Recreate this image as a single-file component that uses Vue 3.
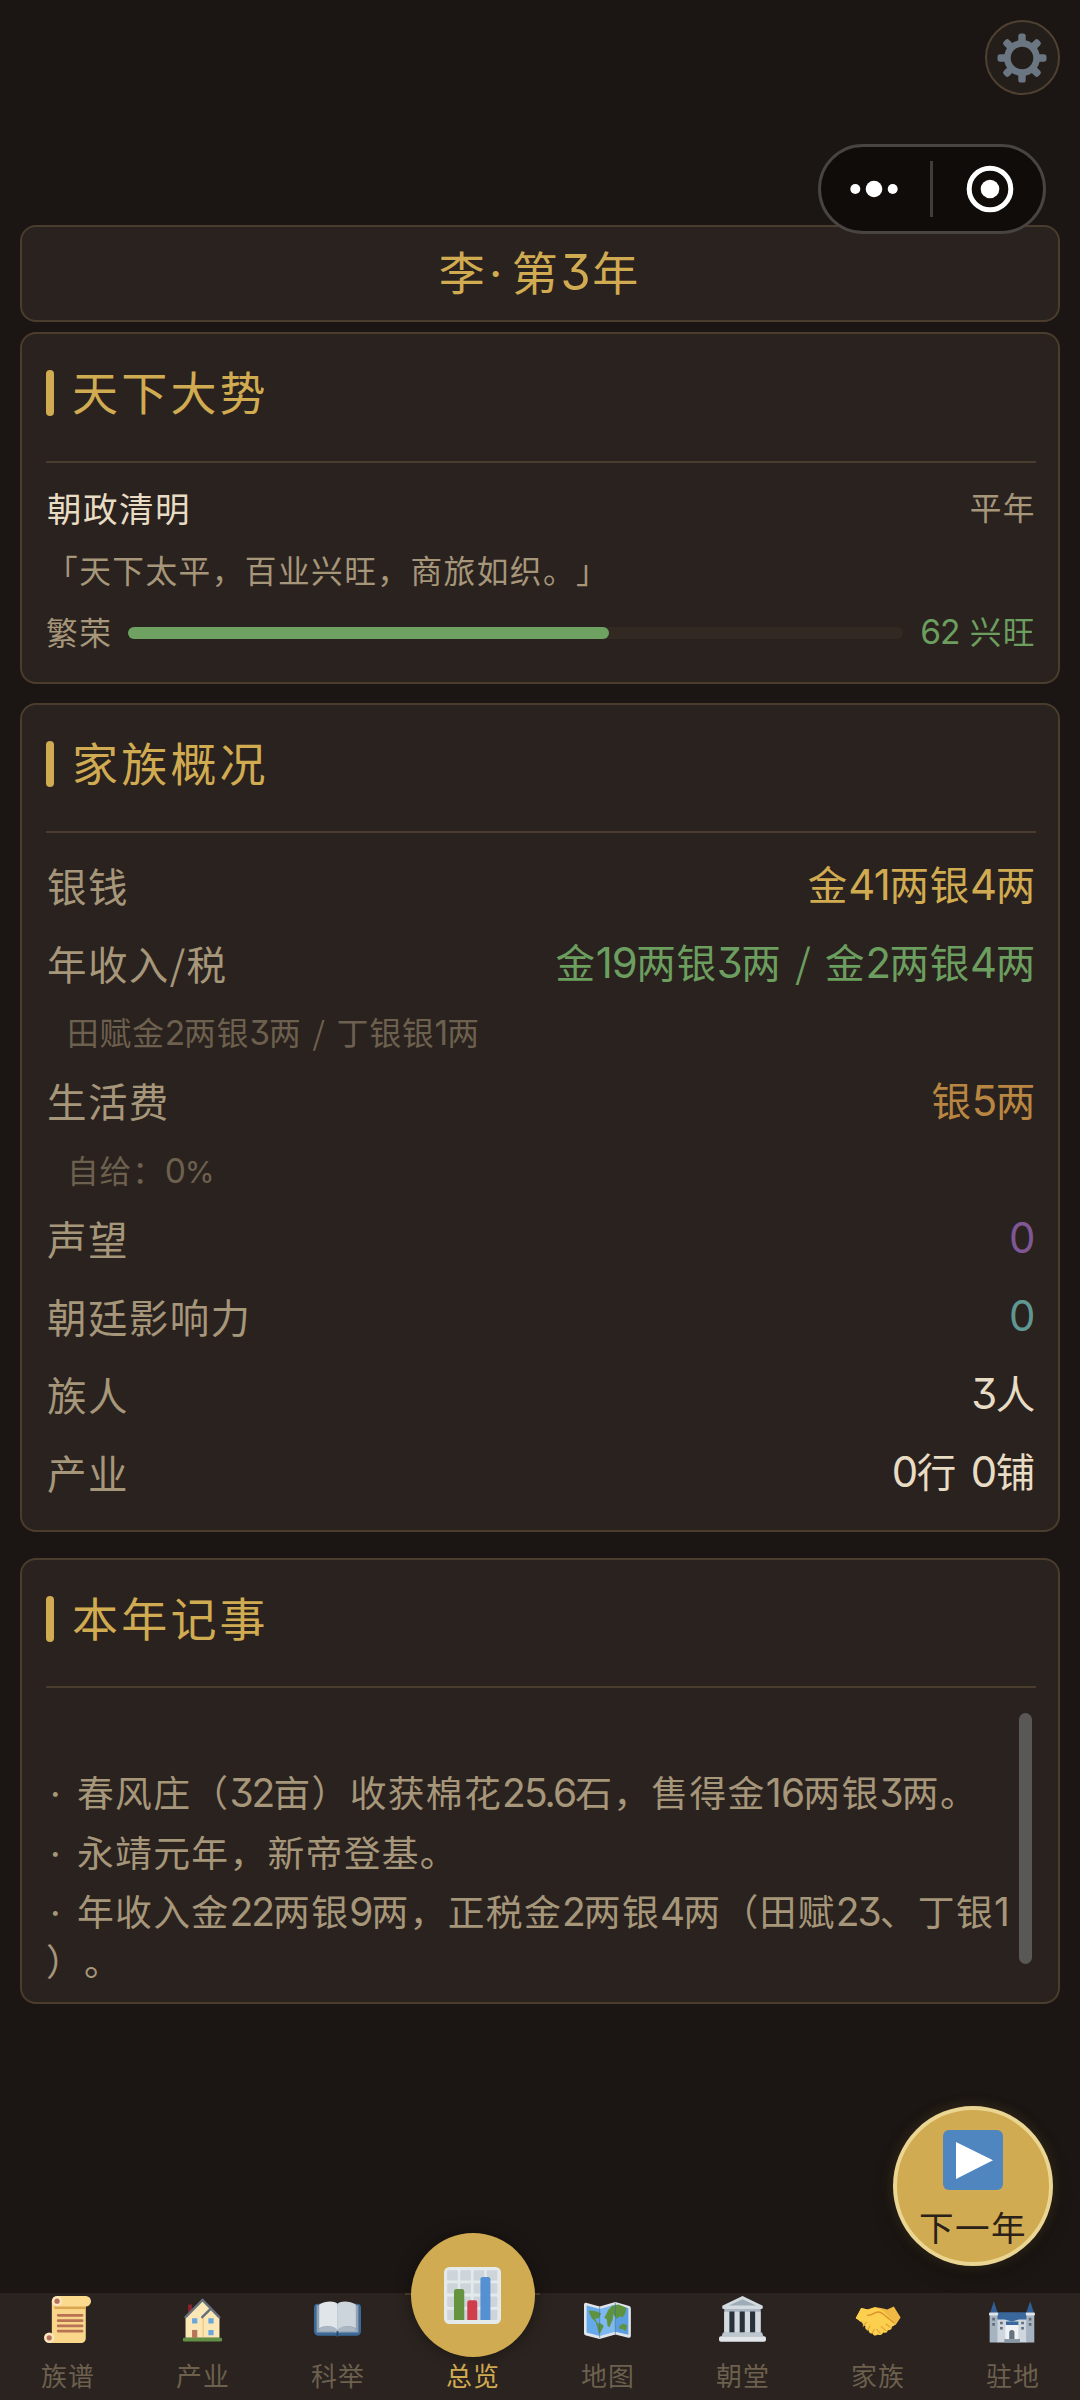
<script setup>
import { h } from 'vue'

// Renders mixed text, giving figures and the middle dot their own face and advance.
const cls = (s) => (s === '1' ? 'n one' : s === '·' ? 'mid' : s === '%' ? 'n pct' : 'n')
const Txt = (props) =>
  h('span', { class: 'txt' },
    props.t.split(/(1|%|·|[02-9.]+)/).map((s, i) => (i % 2 ? h('span', { class: cls(s) }, s) : s)))
Txt.props = ['t']

const prosperity = 62

const rows = [
  { k: '银钱', v: '金41两银4两', c: 'gold' },
  { k: '年收入/税', v: '金19两银3两 / 金2两银4两', c: 'green' },
  { sub: '田赋金2两银3两 / 丁银银1两' },
  { k: '生活费', v: '银5两', c: 'orange' },
  { sub: '自给：0%' },
  { k: '声望', v: '0', c: 'purple' },
  { k: '朝廷影响力', v: '0', c: 'teal' },
  { k: '族人', v: '3人', c: 'cream' },
  { k: '产业', v: '0行 0铺', c: 'cream' },
]

const logs = [
  '春风庄（32亩）收获棉花25.6石，售得金16两银3两。',
  '永靖元年，新帝登基。',
  '年收入金22两银9两，正税金2两银4两（田赋23、丁银1）。',
]

const tabs = [
  { id: 'scroll', name: '族谱' },
  { id: 'house', name: '产业' },
  { id: 'book', name: '科举' },
  { id: 'chart', name: '总览', active: true },
  { id: 'map', name: '地图' },
  { id: 'temple', name: '朝堂' },
  { id: 'hands', name: '家族' },
  { id: 'castle', name: '驻地' },
]
const teeth = [0, 45, 90, 135, 180, 225, 270, 315]
const cellX = [2, 10.3, 18.7, 27]
</script>

<template>
  <div class="page">
    <div class="topbar">
      <div class="gear">
        <svg width="50" height="50" viewBox="-25 -25 50 50">
          <circle r="14.6" fill="none" stroke="#6a7682" stroke-width="6.6" />
          <rect v-for="a in teeth" :key="a" x="-3.7" y="-24.5" width="7.4" height="10" rx="2.6" fill="#6a7682" :transform="`rotate(${a})`" />
        </svg>
      </div>
    </div>

    <div class="capsule">
      <svg width="222" height="84" viewBox="821 147 222 84">
        <circle cx="855.3" cy="189" r="5" fill="#fff" />
        <circle cx="874" cy="189" r="8.3" fill="#fff" />
        <circle cx="892.7" cy="189" r="5" fill="#fff" />
        <rect x="930" y="161" width="3" height="56" fill="#403d3b" />
        <circle cx="990" cy="189" r="20.8" fill="none" stroke="#fff" stroke-width="5" />
        <circle cx="990" cy="189" r="9.3" fill="#fff" />
      </svg>
    </div>

    <div class="box banner"><Txt t="李·第3年" /></div>

    <section class="box world">
      <h2><i></i><span>天下大势</span></h2>
      <div class="wrow"><span class="era">朝政清明</span><span class="dim">平年</span></div>
      <div class="wrow"><span class="dim">「天下太平，百业兴旺，商旅如织。」</span></div>
      <div class="wrow">
        <span class="dim">繁荣</span>
        <div class="track"><div class="fill" :style="{ width: prosperity + '%' }"></div></div>
        <span class="dim green"><Txt :t="prosperity + ' 兴旺'" /></span>
      </div>
    </section>

    <section class="box clan">
      <h2><i></i><span>家族概况</span></h2>
      <template v-for="(r, i) in rows" :key="i">
        <div v-if="r.sub" class="sub"><Txt :t="r.sub" /></div>
        <div v-else class="row"><span class="k">{{ r.k }}</span><span class="v" :class="r.c"><Txt :t="r.v" /></span></div>
      </template>
    </section>

    <section class="box log">
      <h2><i></i><span>本年记事</span></h2>
      <div class="scroller">
        <div class="entries">
          <p v-for="l in logs" :key="l"><span class="dot">·</span><Txt :t="l" /></p>
        </div>
        <div class="thumb"></div>
      </div>
    </section>

    <div class="next">
      <svg width="60" height="60" viewBox="0 0 60 60">
        <rect width="60" height="60" rx="6" fill="#4f86bf" />
        <path d="M13 12 L50 30.3 L13 49 Z" fill="#fff" />
      </svg>
      <span>下一年</span>
    </div>

    <nav>
      <div v-for="t in tabs" :key="t.id" class="tab" :class="{ active: t.active }">
        <div class="ico">
          <svg viewBox="0 0 36 36">
            <g v-if="t.id === 'scroll'">
              <path d="M6 4h26v28.5a3.5 3.5 0 0 1-3.5 3.5H4v-4h2z" fill="#f9d68a" />
              <path d="M8 7.5h24V10H8z" fill="#dba650" />
              <rect x="6" y="0" width="30" height="8" rx="4" fill="#fbd98d" />
              <circle cx="10" cy="4" r="3.9" fill="#fde5bd" /><circle cx="10" cy="4" r="2" fill="#b5705a" />
              <circle cx="4" cy="32" r="4" fill="#fde5bd" /><circle cx="4" cy="32" r="2" fill="#b5705a" />
              <path d="M10.8 14.8h18.4M10.8 18.9h18.4M10.8 22.9h18.4M10.8 26.9h18.4" stroke="#b87355" stroke-width="2" stroke-linecap="round" />
            </g>
            <g v-else-if="t.id === 'house'">
              <path d="M7 6.6h3V14H7z" fill="#8b2230" />
              <path d="M5 16 18 3.5 31 16v16H5z" fill="#fbe6b6" />
              <path d="M18 16.500h1V32h-1z" fill="#edc97e" />
              <path d="M5 16.200 18 3l12.800 13.200M17.800 16.200 24 10" fill="none" stroke="#66707a" stroke-width="1.900" stroke-linecap="round" />
              <path d="M10 17h4v4h-4zM22.500 17h4v4h-4zM22.500 26h4v4h-4z" fill="#6ba7dc" />
              <path d="M10 26h4v6h-4z" fill="#b8745a" />
              <rect x="3" y="32" width="30" height="2.800" rx="1" fill="#638f45" />
            </g>
            <g v-else-if="t.id === 'book'">
              <path d="M3 6h30a3 3 0 0 1 3 3v18a3.500 3.500 0 0 1-3.500 3.500H20L18 31l-2-.5H3.500A3.500 3.500 0 0 1 0 27V9a3 3 0 0 1 3-3z" fill="#3c6996" />
              <path d="M2 7h32v21H20l-2 1-2-1H2z" fill="#93a3b5" />
              <path d="M4 6.500C8 4 15 3 18 6v20.500c-3-4-9-4.500-14-2z" fill="#e0e5ea" />
              <path d="M32 6.500C28 4 21 3 18 6v20.500c3-4 9-4.500 14-2z" fill="#cdd5dc" />
              <path d="M18 26c-3-3.500-9-3.500-14-.8V27h11l3 1 3-1h11v-1.800c-5-2.700-11-2.700-14 .8z" fill="#aab6c2" />
              <path d="M18 27v3.500" stroke="#26476b" stroke-width="1.600" />
            </g>
            <g v-else-if="t.id === 'chart'">
              <rect width="36" height="36" rx="3.500" fill="#e4e9ec" />
              <template v-for="x in cellX" :key="x">
                <rect v-for="y in cellX" :key="y" :x="x" :y="y" width="6.700" height="6.500" rx=".5" fill="#cdd5da" />
              </template>
              <path d="M6.300 33.500V15.400a1.500 1.500 0 0 1 1.500-1.500h3.500a1.500 1.500 0 0 1 1.500 1.500v18.100z" fill="#66933f" />
              <path d="M14.700 33.500V22.500A1.500 1.500 0 0 1 16.200 21h3.300a1.500 1.500 0 0 1 1.500 1.500v11z" fill="#cf3e4a" />
              <path d="M23 33.500V7.800a1.500 1.500 0 0 1 1.500-1.500h3.300a1.500 1.500 0 0 1 1.500 1.500v25.700z" fill="#5590d3" />
            </g>
            <g v-else-if="t.id === 'map'">
              <path d="M1.500 5.200 12 8 24 4.500 34 7.400a2 2 0 0 1 1.900 2V30.500a1.500 1.500 0 0 1-2 1.400L24 29.500 12 33 1.500 30.200A1.800 1.800 0 0 1 0 28.500V6.500a1.300 1.300 0 0 1 1.500-1.300z" fill="#dfe5ea" />
              <path d="M2 7.300 12 10v20.700L2 28z" fill="#65a9ea" />
              <path d="M12 10 24 6.500v20.800L12 30.700z" fill="#7db9f0" />
              <path d="M24 6.500 34 9.400v20.200l-10-2.300z" fill="#5c9fe0" />
              <path d="M3.500 11.500c2-1 5 0 7 .8l2.500 1-1.500 3.500-3 .7 2 3.500c2-.3 4.500 1 4.500 2.500L12.500 28l-1 1.500-1.500-6L9 20l-3-3z" fill="#60933f" />
              <path d="M16.500 15l2-4 3-3.500 5-1 6 2.500-1 4.500-2 3-2-1-2.500 2-2.500-3.500-.5 4-2.500 6-1.500-1-.5-5-2-1.500zM27 23l3-2 3 1.500-1 4.500-2-1.500-3-.5z" fill="#60933f" />
              <path d="M12 8.500V32M24 5v24" stroke="#3f6f9b" stroke-width=".5" />
            </g>
            <g v-else-if="t.id === 'temple'">
              <path d="M4 10h28v19H4z" fill="#aab6c1" />
              <path d="M18 0 33.500 7.500v1.500a1 1 0 0 1-1 1h-29a1 1 0 0 1-1-1V7.500z" fill="#d3dae0" />
              <path d="M18 2.400 28.500 7.300H7.500z" fill="#9eacb8" />
              <path d="M4 12h4v16H4zM12 12h3.700v16H12zM20 12h3.700v16H20zM28 12h3.800v16H28z" fill="#d3dae0" />
              <path d="M8 11.800h3.800V28H8zM15.900 11.800h3.800V28h-3.800zM23.800 11.800h3.800V28h-3.800z" fill="#28313a" />
              <path d="M3 28h30l1 3H2z" fill="#bdc7d0" />
              <rect y="30.800" width="36" height="4.200" rx="1.500" fill="#e0e5ea" />
            </g>
            <g v-else-if="t.id === 'hands'">
              <path d="M1.300 17 5.500 9.200l5 1.200 5-1.800c3 0 7 1 10 1.700L30.500 8l5.200 8.500L32 22l-6 2-15 0z" fill="#f0b944" />
              <path d="M1.300 17 5.500 9.200l5 1.200 6-1.700 5.500 2.500L30.500 20c1.500 1.500.3 3.500-1.500 3.400.4 2-1.500 3.300-3 2.600-.3 2-2.300 2.700-3.700 1.900-.8 2-3 2.500-4 1.500-1.500 1.500-3.800 1-4-.9-1.800.6-3.300-.7-3-2.300-2 .2-3.200-1.500-2.500-3.200-2 0-2.800-1.900-1.800-3.400-2 .1-3.500-.6-3.500-1.600z" fill="#fcd04e" />
              <path d="M10.500 14.800c2.500.3 4.800-1.500 6.500-2.300 2-.7 4 .2 5.500 1.500l8 6.500" fill="none" stroke="#d9922e" stroke-width="1.100" stroke-linecap="round" />
              <path d="M24.500 21.500l3 2.300M21 23.500l3.500 3M17.500 25.500l2.500 3M7 23l2.500-3M10.300 26.200l2-3.200M14 28.300l1.500-2.800" stroke="#e3a239" stroke-width=".9" stroke-linecap="round" />
            </g>
            <g v-else-if="t.id === 'castle'">
              <path d="M5 12.500h25v8H5z" fill="#3a689c" />
              <path d="M6 18h6l5.500 1.500L23 18h6v17.700H6z" fill="#cfd6dd" />
              <path d="M.500 14h6v21.700h-6zM28.700 14h6v21.700h-6z" fill="#a6b3c0" />
              <path d="M3.700 4 6.700 12.800H.900zM31.500 4l3 8.800h-6z" fill="#315f95" />
              <rect y="12.600" width="7" height="2.300" rx=".8" fill="#dfe4ea" /><rect x="28.200" y="12.600" width="7" height="2.300" rx=".8" fill="#dfe4ea" />
              <path d="M13 19.500h9.500v2.800H13z" fill="#3a689c" />
              <path d="M12.500 22.200h10v11h-10z" fill="#eff2f5" />
              <path d="M15.500 33v-5a2 2 0 0 1 4 0v5z" fill="#66727f" />
              <path d="M11.700 33h12v2.700h-12z" fill="#8896a5" />
              <path d="M2.500 16.700h2v2h-2zM2.500 20.700h2v2h-2zM30.500 16.700h2v2h-2zM30.500 20.700h2v2h-2zM8.500 19.700h2v2h-2zM8.500 23.700h2v2h-2zM24.700 19.700h2v2h-2zM24.700 23.700h2v2h-2z" fill="#5f6b78" />
            </g>
          </svg>
        </div>
        <span class="name">{{ t.name }}</span>
      </div>
    </nav>
  </div>
</template>

<style>
body { background: #1b1613; }
</style>

<style scoped>
.page {
  position: relative;
  width: 1080px;
  height: 2400px;
  overflow: hidden;
  display: flex;
  flex-direction: column;
  box-sizing: border-box;
  background: #1b1613;
  font-family: "Noto Sans CJK SC", sans-serif;
  color: #a6967a;
  line-height: 1;
  text-spacing-trim: space-all;
}
.page * { box-sizing: border-box; }
:deep(.n) {
  font-family: Inter, "Noto Sans CJK SC", sans-serif;
  font-size: 1.06em;
  font-feature-settings: "cv09";
  letter-spacing: -0.035em;
  line-height: 1;
}
:deep(.one) { letter-spacing: -0.03em; }
:deep(.pct) { font-size: .96em; }
:deep(.mid) {
  display: inline-block;
  width: .52em;
  font-family: Inter, sans-serif;
  text-indent: .03em;
}
.txt { white-space: pre-wrap; }
.topbar { height: 225px; flex: none; padding: 20px 20px 0; display: flex; justify-content: flex-end; }
.gear {
  width: 75px; height: 75px; border-radius: 50%;
  border: 2px solid #4f4131; background: #241e1a;
  display: flex; align-items: center; justify-content: center;
}
.gear svg { margin-right: 2px; }
.capsule {
  position: absolute; left: 818px; top: 144px; width: 228px; height: 90px; z-index: 2;
  border-radius: 45px; border: 3px solid #474442; background: #100c09;
}
.capsule svg { display: block; }
.box { flex: none; margin: 0 20px; border: 2px solid #4a3d2d; border-radius: 16px; background: #2a221e; }
.banner {
  height: 97px; margin-bottom: 10px; display: flex; align-items: center; justify-content: center;
  font-size: 46px; letter-spacing: 2.900px; color: #d1ab51;
}
.banner :deep(.n) { letter-spacing: .03em; }
.world { height: 352px; margin-bottom: 19px; }
.clan { height: 829px; margin-bottom: 26px; }
.log { height: 446px; }
.box { padding: 36px 22px 0 24px; }
.banner { padding: 0 0 2px; }
h2 {
  margin: 0; padding-bottom: 45px; border-bottom: 2px solid #4a3d2d;
  display: flex; align-items: center; gap: 18px;
  font-size: 46px; line-height: 46px; font-weight: 400; letter-spacing: 3.200px; color: #d1ab51;
}
h2 span { margin: -6px 0 0; }
h2 i { width: 8px; height: 46px; border-radius: 4px; background: #d1ab51; }
.world h2 { margin-bottom: 13px; }
.wrow { height: 62.500px; display: flex; align-items: center; justify-content: space-between; }
.era { font-size: 34.600px; letter-spacing: 1.400px; color: #e8dcc4; padding-left: 1px; }
.dim { font-size: 31.700px; letter-spacing: 1.440px; }
.dim .txt { word-spacing: 2px; }
.track { flex: 1; height: 12px; margin: 2px 17px 0 16px; border-radius: 6px; background: #322923; }
.fill { height: 12px; border-radius: 6px; background: #6fa162; }
.clan h2 { margin-bottom: 12.500px; }
.clan h2, .log h2 { padding-bottom: 44px; }
.row { height: 78px; display: flex; align-items: center; justify-content: space-between; font-size: 39.500px; }
.k { letter-spacing: 1.400px; padding-left: 1px; }
.v { letter-spacing: .8px; word-spacing: 4px; }
.sub { height: 59.600px; padding: 4px 0 0 21px; display: flex; align-items: center; font-size: 31.700px; letter-spacing: .9px; word-spacing: 3px; color: #6d604e; }
.gold { color: #d1ab51; }
.green { color: #6b9e5f; }
.orange { color: #b98642; }
.purple { color: #7f5796; padding-right: 2px; }
.teal { color: #5f9793; padding-right: 2px; }
.cream { color: #e8dcc4; }
.scroller { display: flex; justify-content: space-between; padding: 25px 4px 0 0; }
.entries { width: 966px; padding-top: 53px; font-size: 36.800px; letter-spacing: 1.300px; line-height: 50px; }
.entries p { margin: 0 0 9.500px; word-break: break-all; line-break: anywhere; }
.entries :deep(.n) { letter-spacing: -0.05em; }
.entries :deep(.one) { letter-spacing: -0.01em; }
.dot { display: inline-block; width: 31px; padding-left: 4px; font-family: Inter, sans-serif; line-height: 1; }
.thumb { width: 13px; height: 251px; border-radius: 7px; background: #5a5856; }
.next {
  position: absolute; left: 893px; top: 2106px; width: 160px; height: 160px;
  border-radius: 50%; border: 4px solid #ead593; background: #d1ab51; color: #2a2118;
  box-shadow: 0 0 14px rgba(209, 171, 81, .18), 0 8px 20px rgba(0, 0, 0, .3);
  display: flex; flex-direction: column; align-items: center; padding-top: 20px;
  font-size: 34.600px; letter-spacing: 1.440px;
}
.next span { margin-top: 19px; line-height: 34px; }
nav { margin-top: auto; flex: none; height: 107px; display: flex; background: #2a231f; }
.tab { width: 135px; height: 107px; display: flex; flex-direction: column; align-items: center; color: #6d604e; }
.ico { position: relative; height: 50px; padding-top: 3px; flex: none; }
.ico svg { display: block; width: 47px; height: 47px; }
.name { margin-top: 19px; padding-left: 1px; font-size: 25.900px; line-height: 26px; letter-spacing: 1.200px; }
.active { border-top: 2px solid #4a3d2d; color: #d1ab51; }
.active .ico {
  width: 124px; height: 124px; margin-top: -62px; padding: 0; border-radius: 50%; background: #d1ab51;
  display: flex; align-items: center; justify-content: center; box-shadow: 0 0 16px rgba(0, 0, 0, .35);
}
.active .ico svg { width: 57px; height: 57px; }
.active .name { margin-top: 5px; }
</style>
